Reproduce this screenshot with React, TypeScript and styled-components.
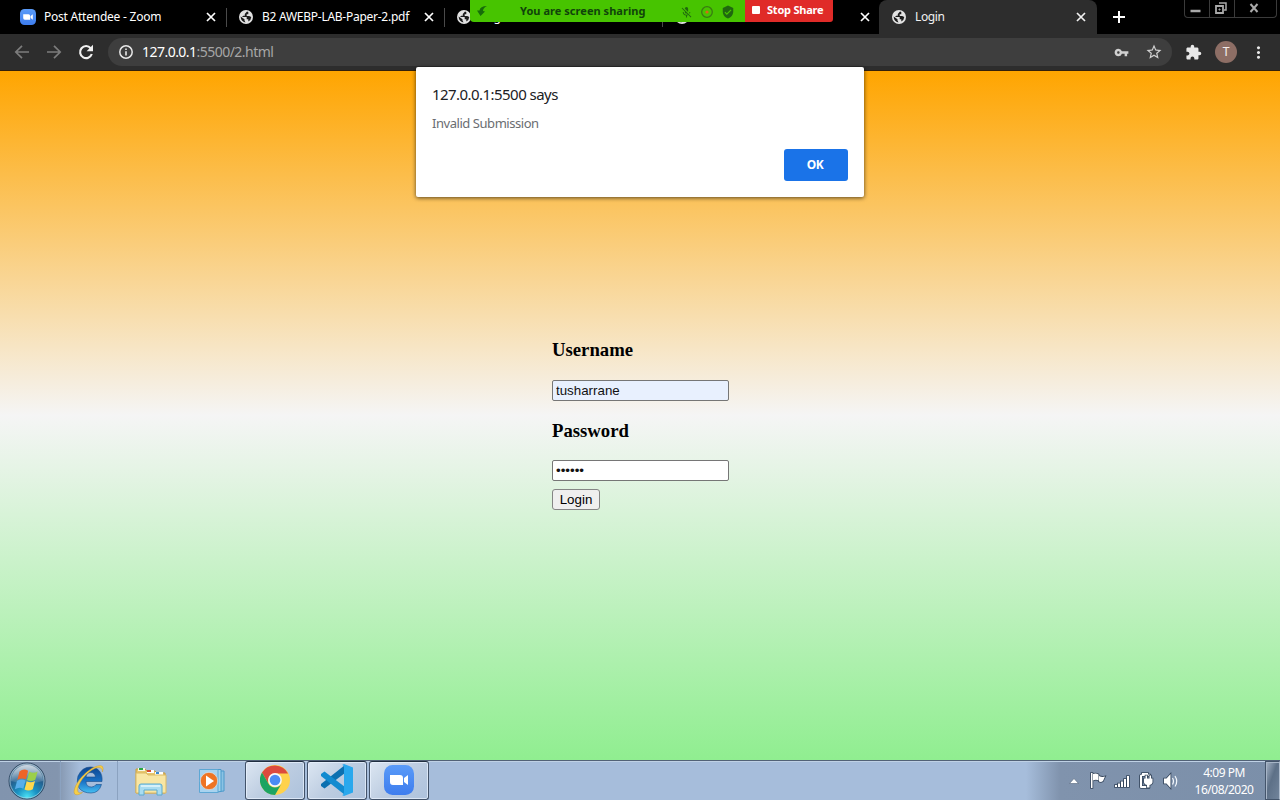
import React from "react";
import styled, { createGlobalStyle } from "styled-components";
import {
  MdExtension,
  MdMicOff,
  MdMoreVert,
  MdStarBorder,
  MdVerifiedUser,
  MdVpnKey,
} from "react-icons/md";

const GlobalStyle = createGlobalStyle`
  * { box-sizing: border-box; }
  body { margin: 0; overflow: hidden; font-family: "Noto Sans", "Open Sans", sans-serif; }
  svg { display: block; flex: none; }
`;

const Screen = styled.div`
  position: relative;
  width: 1280px;
  height: 800px;
  display: flex;
  flex-direction: column;
  overflow: hidden;
`;

/* Tab strip */
const TabStrip = styled.div`
  height: 34px;
  flex: none;
  display: flex;
  background: #000;
  padding-left: 8px;
`;

const Tab = styled.div<{ $active?: boolean; $divided?: boolean }>`
  position: relative;
  width: 218px;
  flex: none;
  height: 34px;
  display: flex;
  align-items: center;
  gap: 8px;
  padding: 0 ${(p) => (p.$active ? 10 : 9)}px 0 12px;
  color: ${(p) => (p.$active ? "#f1f1f1" : "#fff")};
  font-size: 12px;
  background: ${(p) => (p.$active ? "#2d2d2d" : "transparent")};
  border-radius: 8px 8px 0 0;
  margin-left: ${(p) => (p.$active ? "-1px" : "0")};
  &::after {
    content: "";
    position: absolute;
    right: -1px;
    top: 8px;
    width: 1px;
    height: 19px;
    background: ${(p) => (p.$divided ? "#4a4a4a" : "transparent")};
  }
`;

const TabTitle = styled.span<{ $spacing?: number }>`
  flex: 1;
  white-space: nowrap;
  line-height: 18px;
  letter-spacing: ${(p) => p.$spacing ?? 0}px;
`;

const NewTab = styled.div`
  width: 44px;
  height: 34px;
  display: grid;
  place-items: center;
  color: #fff;
`;

const WindowButtons = styled.div`
  display: grid;
  grid-template-columns: 24px 25px 42px;
  width: 93px;
  height: 18px;
  margin-left: auto;
  margin-right: 3px;
  border: 1px solid #3b3b3b;
  border-top: 0;
  border-radius: 0 0 4px 4px;
  color: #a9a9a9;
`;

const WindowButton = styled.div`
  display: grid;
  place-items: center;
  padding: 0 3px 1px 0;
  & + & {
    border-left: 1px solid #3b3b3b;
  }
`;

/* Toolbar */
const Toolbar = styled.div`
  height: 37px;
  flex: none;
  display: flex;
  align-items: center;
  padding-left: 14px;
  background: #2d2d2d;
  border-bottom: 1px solid #34200a;
  color: #e8e8e8;
`;

const NavButton = styled.div<{ $dim?: boolean }>`
  width: 32px;
  color: ${(p) => (p.$dim ? "#7c7c7c" : "#f1f1f1")};
`;

const AddressBar = styled.div`
  width: 1064px;
  height: 28px;
  margin-left: -2px;
  display: flex;
  align-items: center;
  padding: 0 9px 0 10px;
  border-radius: 14px;
  background: #3e3e3e;
`;

const Url = styled.div`
  flex: 1;
  margin-left: 8px;
  font-size: 14px;
  line-height: 20px;
  letter-spacing: -0.53px;
  color: #a6a6a6;
  b {
    font-weight: 400;
    color: #fff;
  }
`;

const AddressIcons = styled.div`
  display: flex;
  align-items: center;
  gap: 16px;
  color: #d0d0d0;
`;

const Extensions = styled.div`
  width: 31px;
  padding-left: 13px;
`;

const Avatar = styled.div`
  width: 22px;
  height: 22px;
  margin: 0 12px;
  border-radius: 50%;
  display: grid;
  place-items: center;
  background: #8d6e65;
  color: #f4eeee;
  font: 12px/22px Roboto, sans-serif;
`;

/* Screen sharing banner */
const ShareBanner = styled.div`
  position: absolute;
  left: 470px;
  top: 0;
  width: 363px;
  height: 22px;
  display: flex;
  border-radius: 0 0 3px 4px;
  overflow: hidden;
  font-size: 11px;
  font-weight: 700;
  line-height: 22px;
`;

const ShareStatus = styled.div`
  width: 275px;
  display: flex;
  align-items: center;
  padding-left: 6px;
  background: #47c400;
  color: #10430b;
`;

const ShareText = styled.span`
  margin-left: 32px;
  width: 160px;
  white-space: nowrap;
  letter-spacing: 0.04px;
`;

const ShareIcons = styled.div`
  display: flex;
  align-items: center;
  gap: 8px;
  padding-top: 2px;
  color: #20680f;
`;

const StopShare = styled.div`
  width: 88px;
  display: flex;
  align-items: center;
  gap: 7px;
  padding: 0 0 2px 7px;
  background: #e02b28;
  color: #fff;
  white-space: nowrap;
  letter-spacing: -0.22px;
`;

const StopSquare = styled.span`
  width: 8px;
  height: 8px;
  border-radius: 1px;
  background: #fff;
`;

/* Page */
const Page = styled.main`
  flex: 1;
  background: linear-gradient(orange, whitesmoke, lightgreen);
  display: flex;
  justify-content: center;
  padding: 268px 0 0 1px;
`;

const Form = styled.form`
  width: 177px;
  font-family: "Liberation Serif", serif;
`;

const Heading = styled.h3`
  margin: 0;
  font-size: 18.72px;
  line-height: 22px;
  color: #000;
`;

const Field = styled.input<{ $filled?: boolean }>`
  display: block;
  width: 177px;
  height: 21px;
  margin: ${(p) => (p.$filled ? "19px 0" : "18px 0 8px")};
  padding: 1px 2px 1px 3px;
  border: 1px solid #767676;
  border-radius: 2px;
  background: ${(p) => (p.$filled ? "#e8f0fe" : "#fff")};
  color: #111;
  font: 13.333px "Liberation Sans", sans-serif;
`;

const LoginButton = styled.button`
  display: block;
  width: 48px;
  height: 21px;
  padding: 0;
  border: 1px solid #858585;
  border-radius: 3px;
  background: #efefef;
  color: #000;
  font: 13.333px "Liberation Sans", sans-serif;
`;

const Dialog = styled.div`
  position: absolute;
  left: 416px;
  top: 67px;
  width: 448px;
  height: 130px;
  padding: 16px 16px 16px;
  display: flex;
  flex-direction: column;
  background: #fff;
  border-radius: 2px;
  box-shadow: 0 1px 4px rgba(0, 0, 0, 0.65);
`;

const DialogTitle = styled.div`
  font-size: 15px;
  line-height: 22px;
  letter-spacing: -0.55px;
  color: #202124;
`;

const DialogText = styled.div`
  margin-top: 9px;
  font-size: 13px;
  line-height: 18px;
  letter-spacing: -0.45px;
  color: #6a6d71;
`;

const OkButton = styled.button`
  width: 64px;
  height: 32px;
  margin: auto 0 0 auto;
  padding: 0 2px 2px 0;
  border: 0;
  border-radius: 3px;
  background: #1a73e8;
  color: #fff;
  font: 700 12px "Noto Sans", sans-serif;
  letter-spacing: -0.4px;
`;

/* Taskbar */
const Taskbar = styled.footer`
  height: 40px;
  flex: none;
  display: flex;
  align-items: stretch;
  border-top: 1px solid #526277;
  background: linear-gradient(90deg, #8194ae 0, #8395ae 58px, #a6bddb 80px, #a6bddb 1026px, #8093ad 1060px, #7b8fa9 100%);
  box-shadow: inset 0 1px 0 #bfd1e5;
`;

const TaskSlot = styled.div<{ $width: number; $line?: boolean; $shift?: number }>`
  width: ${(p) => p.$width}px;
  flex: none;
  display: grid;
  place-items: center;
  padding-right: ${(p) => p.$shift ?? 0}px;
  border-right: 1px solid ${(p) => (p.$line ? "#8ba2c0" : "transparent")};
`;

const TaskButton = styled.div`
  width: 60px;
  height: 39px;
  margin-right: 2px;
  flex: none;
  display: grid;
  place-items: center;
  padding-bottom: 1px;
  border: 1px solid #42536a;
  border-top-color: #202e40;
  border-radius: 3px;
  background: linear-gradient(135deg, #dce6f2, #bdcde1 50%, #adc2dc);
  box-shadow: inset 0 0 0 1px rgba(235, 244, 255, 0.7);
`;

const Tray = styled.div`
  margin-left: auto;
  display: flex;
  align-items: center;
`;

const Clock = styled.div`
  width: 80px;
  text-align: center;
  color: #fff;
  font-size: 12px;
  line-height: 17px;
  letter-spacing: -0.5px;
`;

const ShowDesktop = styled.div`
  width: 15px;
  margin-left: 1px;
  align-self: stretch;
  border: 1px solid #44556b;
  border-right-color: #aebccd;
  background: linear-gradient(110deg, #a5b3c5, #5d7087 45%, #71849b);
  box-shadow: inset 1px 1px 0 #a7b5c7;
`;

function CloseIcon() {
  return (
    <svg width="12" height="12" viewBox="0 0 12 12">
      <path d="M2 2l8 8M10 2l-8 8" stroke="currentColor" strokeWidth="1.700" />
    </svg>
  );
}

function GlobeIcon() {
  return (
    <svg width="16" height="16" viewBox="0 0 16 16">
      <circle cx="8" cy="8" r="7" fill="#e2e2e2" />
      <path
        d="M9 2.600L6.800 5v1.800H5.200L4 8h4.700v2.200h1.600v2.300q2.700-1.100 3-4.400l-2.100-1H8.700V5.300h1.600V3q-.5-.4-1.300-.4z"
        fill="#1b1b1b"
      />
      <path d="M2.600 7.600l3.900 2.600v1.400l1 1.800q-4.600-.5-4.900-5.800z" fill="#1b1b1b" />
    </svg>
  );
}

function InfoIcon() {
  return (
    <svg width="16" height="16" viewBox="0 0 16 16">
      <circle cx="8" cy="8" r="6.200" fill="none" stroke="currentColor" strokeWidth="1.500" />
      <path d="M7.200 7.200h1.600v4.300H7.200zM7.200 4.500h1.600V6H7.200z" fill="currentColor" />
    </svg>
  );
}

function ArrowIcon({ forward }: { forward?: boolean }) {
  return (
    <svg width="16" height="16" viewBox="0 0 16 16" fill="none" stroke="currentColor" strokeWidth="1.700">
      <path d={forward ? "M1 8h13M8 1.800L14.200 8 8 14.200" : "M15 8H2M8 1.800L1.800 8 8 14.200"} />
    </svg>
  );
}

function ReloadIcon() {
  return (
    <svg width="16" height="16" viewBox="0 0 16 16">
      <path d="M12.700 4.200A6 6 0 1013.800 10" fill="none" stroke="currentColor" strokeWidth="2.100" />
      <path d="M15 .8v6.400H8.600z" fill="currentColor" />
    </svg>
  );
}

function ZoomLogo({ size }: { size: number }) {
  return (
    <svg width={size} height={size} viewBox="0 0 30 30">
      <defs>
        <linearGradient id="zoomBlue" x2="0" y2="1">
          <stop stopColor="#5a9bf8" />
          <stop offset="1" stopColor="#3e7dee" />
        </linearGradient>
      </defs>
      <rect width="30" height="30" rx="8.500" fill="url(#zoomBlue)" />
      <path d="M6 10h10q3 0 3 3v7H9q-3 0-3-3zM20 13l4-3v10l-4-3z" fill="#fff" />
    </svg>
  );
}

function StartOrb() {
  return (
    <svg width="38" height="38" viewBox="0 0 38 38">
      <defs>
        <radialGradient id="orb" cx=".5" cy=".95" r=".9">
          <stop stopColor="#4be2f5" />
          <stop offset=".32" stopColor="#1a93c4" />
          <stop offset=".65" stopColor="#24608f" />
          <stop offset="1" stopColor="#7592ab" />
        </radialGradient>
        <linearGradient id="orbShine" x2="0" y2="1">
          <stop stopColor="#fff" stopOpacity=".65" />
          <stop offset="1" stopColor="#fff" stopOpacity=".08" />
        </linearGradient>
      </defs>
      <circle cx="19" cy="19" r="18" fill="url(#orb)" stroke="#334b65" />
      <circle cx="19" cy="19" r="17" fill="none" stroke="#c3dbe6" strokeOpacity=".6" />
      <path d="M3 19a16 16 0 0132 0q-16 5-32 0" fill="url(#orbShine)" />
      <path d="M11.500 9.600q4-3.600 8.600-.9l-2.200 8.600q-4.200-2-8.600.6z" fill="#ee6427" />
      <path d="M21.300 9.500q4 2.600 8.300-.1l-2.300 8.300q-4.200 2.400-8.300.3z" fill="#9bcf4b" />
      <path d="M9 19q4.300-2.700 8.500-.5l-2.200 8.200q-4-2.200-8.400.6z" fill="#58aeea" />
      <path d="M18.700 19.200q4.200 2.200 8.300-.2l-2.200 8.200q-4.200 2.400-8.300.2z" fill="#ffd84d" />
    </svg>
  );
}

function ExplorerLogo() {
  return (
    <svg width="32" height="34" viewBox="0 0 32 34">
      <defs>
        <linearGradient id="ie" x2="0" y2="1">
          <stop stopColor="#0d4590" />
          <stop offset=".55" stopColor="#1971c5" />
          <stop offset="1" stopColor="#45bff2" />
        </linearGradient>
      </defs>
      <path
        d="M29 17.500H13q0 5.500 5.500 5.500 3 0 4.500-2.500h5.500Q26 29 18 29 10 29 6 24 3 18 5 12 9 3 17.500 3C25 3 30 9 29 17.500zM13 13h9.500q-.5-4.500-4.700-4.500T13 13z"
        fill="url(#ie)"
        stroke="#174c8a"
        strokeWidth=".6"
      />
      <path
        d="M29.500 8q2.500-8-5-6C16 4 4 16 1.500 25c-2 7 3 7 8 3.500C1 31 5 20 11 13 18 5 29-1 29.500 8z"
        fill="#f6cf47"
        stroke="#c9993a"
        strokeWidth=".5"
      />
    </svg>
  );
}

function FolderIcon() {
  return (
    <svg width="34" height="32" viewBox="0 0 34 32">
      <path d="M2 4h9l2 2h8l2 2h8v20H2z" fill="#e8c66c" stroke="#c69c43" />
      <path d="M4 3h7v3H4z" fill="#f5f6e5" />
      <path d="M5 3h4v2H5z" fill="#28a745" />
      <path d="M13 5h7v3h-7z" fill="#fff" />
      <path d="M13 5h4v2h-4z" fill="#d64b32" />
      <path d="M21 7h8v3h-8z" fill="#fff" />
      <path d="M22 7h3v2h-3z" fill="#3b8bd0" />
      <path d="M2 8h10l2 2h18v18H2z" fill="#f8e6a4" stroke="#dbb965" />
      <path d="M5 30V21q0-2 2-2h19q2 0 2 2v9h-5v-5H10v5z" fill="#a9dcf0" stroke="#5aaad0" />
      <path d="M7 21h19" stroke="#e4f7fd" strokeWidth="1.500" />
    </svg>
  );
}

function MediaIcon() {
  return (
    <svg width="30" height="28" viewBox="0 0 30 28">
      <path d="M17 4h9v20l-9 1z" fill="#8bc3e4" stroke="#4b9aca" />
      <path d="M14 2.500h9v22l-9 1z" fill="#a7d5ee" stroke="#4b9aca" />
      <path d="M1.500 2.500h18.500v23H1.500z" fill="#a8d3ef" stroke="#5da7d4" />
      <circle cx="11" cy="14" r="8.700" fill="#ee7424" stroke="#d7e7f0" strokeWidth=".7" />
      <path d="M8 8.500v11l8-5.500z" fill="#fff" />
    </svg>
  );
}

function ChromeLogo() {
  return (
    <svg width="30" height="30" viewBox="0 0 30 30">
      <circle cx="15" cy="15" r="15" fill="#ffd24b" />
      <path d="M2 7.500A15 15 0 0128 8.500H15a7.500 7.500 0 00-6.500 10.250z" fill="#dc4a3e" />
      <path d="M2 7.500A15 15 0 0015 30l6.500-11.250a7.500 7.500 0 01-13 0z" fill="#1da462" />
      <circle cx="15" cy="15" r="6.900" fill="#f5f7fa" />
      <circle cx="15" cy="15" r="5.300" fill="#4b8bf4" />
    </svg>
  );
}

function CodeLogo() {
  return (
    <svg width="32" height="32" viewBox="0 0 32 32">
      <path d="M0 22l3.500 2.500L24 9V1L0 20z" fill="#0c70b0" />
      <path d="M0 10l3.500-2.500L24 23v8L0 12z" fill="#128bd0" />
      <path d="M23 0l9 3.500v25L23 32l-2-1q2 0 2-3V4q0-3-2-3z" fill="#29a8ed" />
    </svg>
  );
}

function TrayIcons() {
  return (
    <svg width="116" height="22" viewBox="0 0 116 22" fill="#fff">
      <path d="M1.500 13.500L6 8.500l4.500 5z" stroke="#52647c" strokeWidth=".6" />
      <g stroke="#33445a" strokeWidth="1.600" paintOrder="stroke">
        <path d="M23 3h1.500v15H23zM25 4q3-1 5.500.5v6Q28 9 25 10.500zM31 6q3 1.500 6 .5l-2 4.500q-2 1.500-4 .5z" />
        <path d="M47 15h2v2h-2zM50 13.500h2V17h-2zM53 11.500h2V17h-2zM56 9h2v8h-2zM59 6h2v11h-2z" />
        <path d="M74 3h6v1.500h2V6h-8v10h7v2h-8q-1 0-1-1V5.500q0-1 2-1z" />
        <path d="M76 8.500h1.500V5.500H79v3h2.500v-3H83v3h1.500v4q-.5 2-3 2.500v2.500H79V15q-2.500-.5-3-2.500z" />
        <path d="M96 8.500h2.500l4-4.500v14l-4-4.500H96z" />
      </g>
      <path d="M104.500 8q2 3 0 6.500M107 6q3.500 5.500 0 10.500" fill="none" stroke="#f3f7fc" strokeWidth="1.200" />
    </svg>
  );
}

export default function App() {
  return (
    <>
      <GlobalStyle />
      <Screen>
        <TabStrip>
          <Tab $divided>
            <ZoomLogo size={16} />
            <TabTitle $spacing={-0.23}>Post Attendee - Zoom</TabTitle>
            <CloseIcon />
          </Tab>
          <Tab $divided>
            <GlobeIcon />
            <TabTitle $spacing={-0.26}>B2 AWEBP-LAB-Paper-2.pdf</TabTitle>
            <CloseIcon />
          </Tab>
          <Tab $divided>
            <GlobeIcon />
            <TabTitle>Login</TabTitle>
          </Tab>
          <Tab>
            <GlobeIcon />
            <TabTitle />
            <CloseIcon />
          </Tab>
          <Tab $active>
            <GlobeIcon />
            <TabTitle $spacing={-0.4}>Login</TabTitle>
            <CloseIcon />
          </Tab>
          <NewTab>
            <svg width="12" height="12" viewBox="0 0 12 12">
              <path d="M6 0v12M0 6h12" stroke="currentColor" strokeWidth="2" />
            </svg>
          </NewTab>
          <WindowButtons>
            <WindowButton>
              <svg width="11" height="12" viewBox="0 0 11 12">
                <path d="M.5 9h10" stroke="currentColor" strokeWidth="2.500" />
              </svg>
            </WindowButton>
            <WindowButton>
              <svg width="12" height="12" viewBox="0 0 12 12" fill="none" stroke="currentColor">
                <path d="M4 1h7v7H9" strokeWidth="1.500" />
                <path d="M1 4h7v7H1z" strokeWidth="1.800" />
                <path d="M4 7h1v1H4z" />
              </svg>
            </WindowButton>
            <WindowButton>
              <svg width="10" height="10" viewBox="0 0 10 10">
                <path d="M1.500 1l7 8M8.500 1l-7 8" stroke="currentColor" strokeWidth="2" />
              </svg>
            </WindowButton>
          </WindowButtons>
        </TabStrip>

        <Toolbar>
          <NavButton $dim><ArrowIcon /></NavButton>
          <NavButton $dim><ArrowIcon forward /></NavButton>
          <NavButton><ReloadIcon /></NavButton>
          <AddressBar>
            <InfoIcon />
            <Url><b>127.0.0.1</b>:5500/2.html</Url>
            <AddressIcons>
              <MdVpnKey size={15} />
              <MdStarBorder size={18} />
            </AddressIcons>
          </AddressBar>
          <Extensions><MdExtension size={17} /></Extensions>
          <Avatar>T</Avatar>
          <MdMoreVert size={19} />
        </Toolbar>

        <Page>
          <Form onSubmit={(e) => e.preventDefault()}>
            <Heading>Username</Heading>
            <Field $filled defaultValue="tusharrane" />
            <Heading>Password</Heading>
            <Field type="password" defaultValue="secret" />
            <LoginButton>Login</LoginButton>
          </Form>
        </Page>

        <Taskbar>
          <TaskSlot $width={61} $line $shift={6}><StartOrb /></TaskSlot>
          <TaskSlot $width={57} $line><ExplorerLogo /></TaskSlot>
          <TaskSlot $width={66}><FolderIcon /></TaskSlot>
          <TaskSlot $width={61} $shift={2}><MediaIcon /></TaskSlot>
          <TaskButton><ChromeLogo /></TaskButton>
          <TaskButton><CodeLogo /></TaskButton>
          <TaskButton><ZoomLogo size={30} /></TaskButton>
          <Tray>
            <TrayIcons />
            <Clock>
              <div>4:09 PM</div>
              <div>16/08/2020</div>
            </Clock>
            <ShowDesktop />
          </Tray>
        </Taskbar>

        <ShareBanner>
          <ShareStatus>
            <svg width="12" height="12" viewBox="0 0 12 12">
              <path d="M11 1Q4 1 3.500 5.500H1L4.500 11 9 6.500 7 6q0-3 4-5z" fill="#176c0a" />
            </svg>
            <ShareText>You are screen sharing</ShareText>
            <ShareIcons>
              <MdMicOff size={13} />
              <svg width="12" height="12" viewBox="0 0 12 12">
                <circle cx="6" cy="6" r="5.300" fill="none" stroke="#397b12" strokeWidth="1.300" />
                <circle cx="6" cy="6" r="1.600" fill="#d66817" />
              </svg>
              <MdVerifiedUser size={14} />
            </ShareIcons>
          </ShareStatus>
          <StopShare><StopSquare />Stop Share</StopShare>
        </ShareBanner>

        <Dialog>
          <DialogTitle>127.0.0.1:5500 says</DialogTitle>
          <DialogText>Invalid Submission</DialogText>
          <OkButton>OK</OkButton>
        </Dialog>
      </Screen>
    </>
  );
}
